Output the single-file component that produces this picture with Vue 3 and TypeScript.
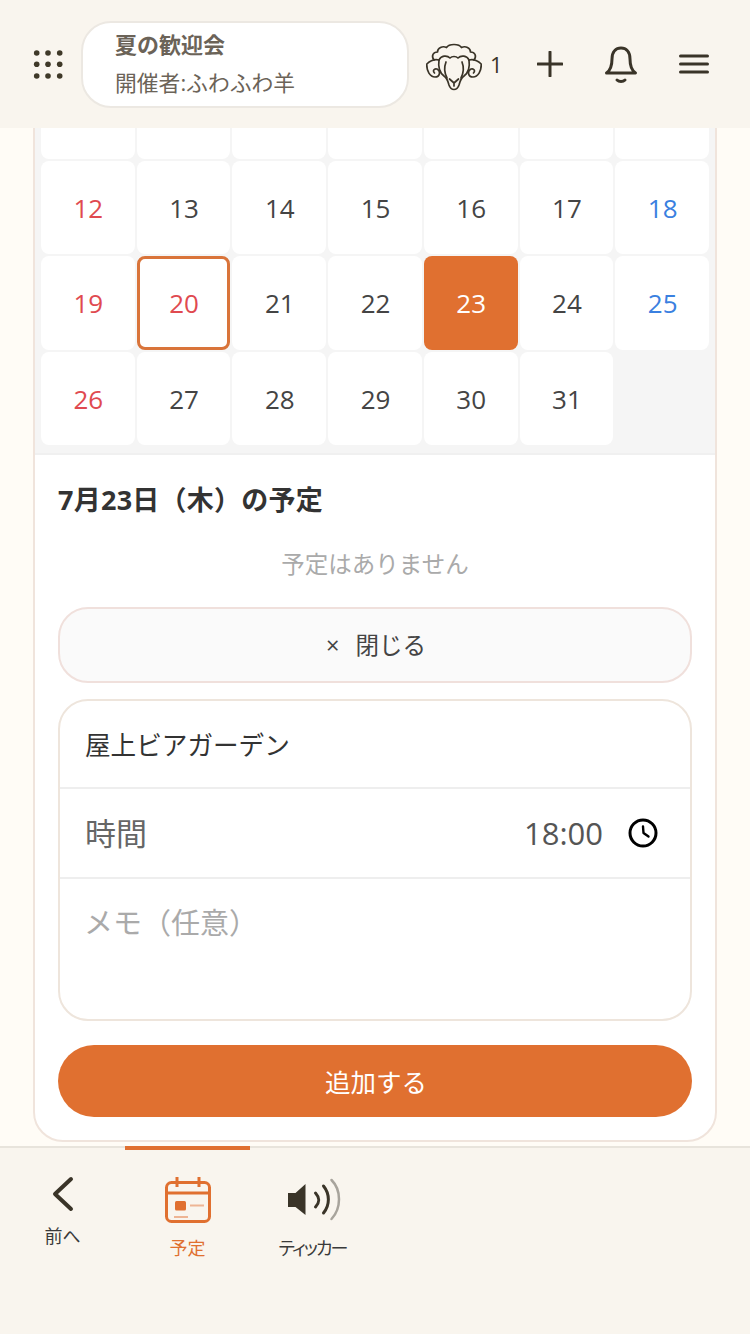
<script setup lang="ts">
type Day = { label: string; tone: string; empty?: boolean }

const tones = ['sun', '', '', '', '', '', 'sat']
const holidays = [20]

// 2026年7月。スクロールで隠れる週はラベルなし
const days: Day[] = []
for (let d = 5; d <= 31; d++) {
  const col = (d + 2) % 7
  days.push({
    label: d >= 12 ? String(d) : '',
    tone: holidays.includes(d) ? 'sun' : tones[col],
  })
}
days.push({ label: '', tone: '', empty: true })

const dayClass = (day: Day) => [
  'day',
  day.tone,
  { empty: day.empty, today: day.label === '20', selected: day.label === '23' },
]
</script>

<template>
  <div class="page">
    <header class="top">
      <svg class="dots" width="30" height="30" viewBox="0 0 30 30" aria-hidden="true">
        <g fill="#3f3928">
          <circle cx="3.700" cy="4" r="2.800" /><circle cx="15" cy="4" r="2.800" /><circle cx="26.700" cy="4" r="2.800" />
          <circle cx="3.700" cy="15.300" r="2.800" /><circle cx="15" cy="15.300" r="2.800" /><circle cx="26.700" cy="15.300" r="2.800" />
          <circle cx="3.700" cy="27" r="2.800" /><circle cx="15" cy="27" r="2.800" /><circle cx="26.700" cy="27" r="2.800" />
        </g>
      </svg>
      <div class="event">
        <div class="event-name">夏の歓迎会</div>
        <div class="event-host">開催者:ふわふわ羊</div>
      </div>
      <svg class="sheep" width="56" height="48" viewBox="0 0 56 48" fill="none" stroke="#3a3428" stroke-width="1.700" stroke-linecap="round" stroke-linejoin="round" aria-hidden="true">
        <path d="M8 17C5 13 7 9 11.500 9C11.500 5 16.500 2.500 20.500 4.500C23 0.500 33 0.500 35.500 4.500C39.500 2.500 44.500 5 44.500 9C49 9 51 13 48 17" />
        <path d="M13 17C15 12.500 21 12 24 15C26 13 30 13 32 15C35 12 41 12.500 43 17" />
        <path d="M13 17C12 24 14 30 18 33C21 35 22 38 23 42C24 45 26 46.500 28 46.500C30 46.500 32 45 33 42C34 38 35 35 38 33C42 30 44 24 43 17" />
        <path d="M20 19C18 24 18 29 21 35M36 19C38 24 38 29 35 35" />
        <path d="M23.500 36L28 40L32.500 36M28 40V43" />
        <path d="M13 17C9 16 4 18 0.800 21C0.500 28 4 34 9 34C14 34 15 28 11 26C8 25 6.500 28 8.500 30" />
        <path d="M43 17C47 16 52 18 55.200 21C55.500 28 52 34 47 34C42 34 41 28 45 26C48 25 49.500 28 47.500 30" />
      </svg>
      <span class="count">1</span>
      <svg class="plus" width="26" height="26" viewBox="0 0 26 26" stroke="#3a3428" stroke-width="3" stroke-linecap="round" aria-hidden="true">
        <path d="M1 13H25M13 1V25" />
      </svg>
      <svg class="bell" width="34" height="38" viewBox="0 0 34 38" fill="none" stroke="#3a3428" stroke-width="3" stroke-linecap="round" stroke-linejoin="round" aria-hidden="true">
        <path d="M2.500 27C7 24 8 20 8 13C8 5.500 12 2 17 2C22 2 26 5.500 26 13C26 20 27 24 31.500 27Z" />
        <path d="M13 34C15 36 19 36 21 34" />
      </svg>
      <svg class="menu" width="30" height="20" viewBox="0 0 30 20" stroke="#3a3428" stroke-width="3" stroke-linecap="round" aria-hidden="true">
        <path d="M1.500 2H28.500M1.500 10H28.500M1.500 18H28.500" />
      </svg>
    </header>

    <main class="content">
      <div class="card">
        <div class="calendar">
          <div v-for="(day, i) in days" :key="i" :class="dayClass(day)">{{ day.label }}</div>
        </div>
        <section class="detail">
          <h2 class="detail-title">7月23日（木）の予定</h2>
          <p class="none">予定はありません</p>
          <button type="button" class="close"><span class="close-x">×</span>閉じる</button>
          <div class="form">
            <div class="row row-name">屋上ビアガーデン</div>
            <div class="row row-time">
              <span class="time-label">時間</span>
              <span class="time-value">18:00</span>
              <svg width="30" height="30" viewBox="0 0 30 30" fill="none" stroke="#000" stroke-width="3" stroke-linecap="round" stroke-linejoin="round" aria-hidden="true">
                <circle cx="15" cy="15" r="13" />
                <path d="M15 8.500L15.500 15L20.500 18.500" stroke-width="2.400" />
              </svg>
            </div>
            <div class="row-memo">メモ（任意）</div>
          </div>
          <button type="button" class="submit">追加する</button>
        </section>
      </div>
    </main>

    <nav class="bottom">
      <div class="tab tab-back">
        <svg width="24" height="36" viewBox="0 0 24 36" fill="none" stroke="#3a3428" stroke-width="4" stroke-linecap="round" stroke-linejoin="round" aria-hidden="true">
          <path d="M20 3L4 18L20 33" />
        </svg>
        <span>前へ</span>
      </div>
      <div class="tab tab-plan active">
        <svg width="50" height="50" viewBox="0 0 50 50" fill="none" stroke="#e07030" stroke-width="3" aria-hidden="true">
          <rect x="3.500" y="6.500" width="43" height="39" rx="5" />
          <path d="M3.500 17H46.500M14 1V11M36 1V11" />
          <rect x="12" y="25" width="11" height="9.500" rx="1.500" fill="#e07030" stroke="none" />
          <path d="M27 29.500H41M11 41H25" stroke="#eeb594" stroke-width="2" />
        </svg>
        <span>予定</span>
      </div>
      <div class="tab tab-ticker">
        <svg width="56" height="44" viewBox="0 0 56 44" fill="none" stroke="#3a3428" stroke-width="3" stroke-linecap="round" aria-hidden="true">
          <path d="M3 15H10.500L20.500 6V37L10.500 29H3Z" fill="#3a3428" stroke="none" />
          <path d="M30.500 15C35 20 35 24 30.500 29" />
          <path d="M38.500 8C45 16 45 27 38.500 35" />
          <path d="M46.500 2C56.500 12 56.500 30 46.500 41" stroke="#a8a49c" stroke-width="2.500" />
        </svg>
        <span class="ticker-label">ティッカー</span>
      </div>
    </nav>
  </div>
</template>

<style>
html,
body {
  margin: 0;
  background: #fffcf6;
}
</style>

<style scoped>
.page {
  display: flex;
  flex-direction: column;
  height: 1334px;
  overflow: hidden;
  background: #fffcf6;
  font-family: "Open Sans", "Noto Sans CJK JP", sans-serif;
  color: #3a3a3a;
}

.top {
  flex: none;
  display: flex;
  align-items: center;
  height: 128px;
  padding-left: 33px;
  box-sizing: border-box;
  background: #f9f5ee;
}

.dots {
  flex: none;
}

.event {
  flex: none;
  box-sizing: border-box;
  width: 328px;
  height: 87px;
  margin-left: 18px;
  padding: 2px 0 0 32px;
  background: #fff;
  border: 2px solid #ece8e2;
  border-radius: 30px;
  color: #6b6358;
}

.event-name {
  font-size: 22px;
  font-weight: 700;
  line-height: 38px;
}

.event-host {
  font-size: 21.800px;
  line-height: 40px;
  white-space: nowrap;
}

.sheep {
  flex: none;
  margin: 6px 0 0 17px;
}

.count {
  width: 10px;
  margin-left: 8px;
  font-size: 22px;
  color: #3a3428;
}

.plus {
  flex: none;
  margin-left: 37px;
}

.bell {
  flex: none;
  margin: 2px 0 0 41px;
}

.menu {
  flex: none;
  margin-left: 41px;
}

.content {
  flex: 1;
  min-height: 0;
  display: flex;
  flex-direction: column;
  justify-content: flex-end;
  padding: 0 33px 4px;
  overflow: hidden;
}

.card {
  flex: none;
  background: #fff;
  border: 2px solid #f0e4dc;
  border-radius: 30px;
  overflow: hidden;
}

.calendar {
  display: grid;
  grid-template-columns: repeat(7, 1fr);
  grid-auto-rows: 93.500px;
  gap: 2px;
  padding: 6px 6px 7.500px;
  background: #f5f5f5;
  border-bottom: 2px solid #f0f0f0;
}

.day {
  display: flex;
  align-items: center;
  justify-content: center;
  box-sizing: border-box;
  padding: 1px 0 0 1px;
  background: #fff;
  border-radius: 8px;
  font-size: 26px;
  color: #444;
}

.day.sun {
  color: #e04a50;
}

.day.sat {
  color: #3a80e0;
}

.day.empty {
  background: transparent;
}

.day.today {
  border: 3px solid #d9743a;
}

.day.selected {
  background: #e07030;
  color: #fff;
}

.detail {
  padding: 27.500px 23px 23px;
}

.detail-title {
  margin: 0;
  font-size: 27px;
  font-weight: 700;
  line-height: 36px;
  letter-spacing: 0.250px;
  color: #333;
}

.none {
  margin: 28px 0 0;
  font-size: 23.500px;
  line-height: 36px;
  text-align: center;
  color: #aaa;
}

.close {
  display: block;
  box-sizing: border-box;
  width: 100%;
  height: 76px;
  margin-top: 25px;
  padding: 0 0 2px 2px;
  background: #fafafa;
  border: 2px solid #f0e0dc;
  border-radius: 30px;
  font: inherit;
  font-size: 23.500px;
  color: #444;
}

.close-x {
  margin-right: 16px;
}

.form {
  box-sizing: border-box;
  height: 322px;
  margin-top: 16px;
  border: 2px solid #eee5dc;
  border-radius: 30px;
  overflow: hidden;
}

.row {
  display: flex;
  align-items: center;
  box-sizing: border-box;
  height: 90px;
  padding: 0 32px 0 25px;
  border-bottom: 2px solid #eeeeee;
}

.row-name {
  height: 88px;
  font-size: 25.600px;
  color: #333;
}

.row-time {
  font-size: 31px;
  color: #666;
}

.time-label {
  flex: 1;
  margin-bottom: 4px;
}

.time-value {
  margin-right: 25px;
  font-size: 31px;
  color: #555;
}

.row-memo {
  padding: 22px 24px 0;
  font-size: 29px;
  line-height: 44px;
  color: #aaa;
}

.submit {
  display: block;
  width: 100%;
  height: 72px;
  margin-top: 24px;
  padding: 0 0 2px 2px;
  background: #e07030;
  border: none;
  border-radius: 36px;
  font: inherit;
  font-size: 25.500px;
  color: #fff;
}

.bottom {
  flex: none;
  display: flex;
  box-sizing: border-box;
  height: 188px;
  background: #f9f5ee;
  border-top: 2px solid #e8e4dc;
}

.tab {
  position: relative;
  display: flex;
  flex-direction: column;
  align-items: center;
  width: 125px;
  padding-top: 28px;
  font-size: 18px;
  line-height: 26px;
  color: #3a3a3a;
}

.tab-back svg {
  margin-bottom: 11px;
}

.tab-plan svg {
  margin-bottom: 9px;
}

.tab-ticker svg {
  margin: 2px 0 13px;
}

.ticker-label {
  font-size: 18px;
  font-feature-settings: "palt";
  letter-spacing: -2px;
}

.active {
  color: #e07030;
}

.active::before {
  content: "";
  position: absolute;
  top: -2px;
  left: 0;
  right: 0;
  height: 4px;
  background: #e07030;
}
</style>
